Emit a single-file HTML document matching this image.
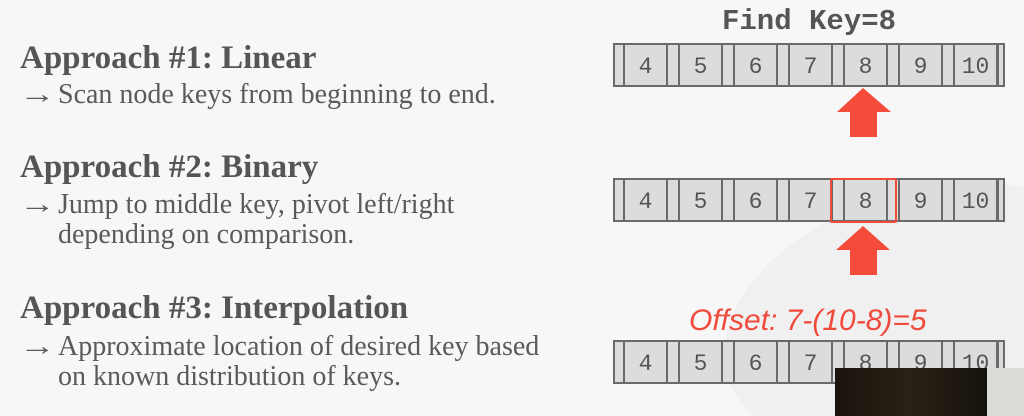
<!DOCTYPE html>
<html style="overflow:hidden;width:1024px;height:416px"><head><meta charset="utf-8"><style>
body{margin:0;width:1024px;height:416px;overflow:hidden;background:#f7f7f7;position:relative;font-family:"Liberation Serif",serif;color:#555}
.clip{position:absolute;left:0;top:0;width:1024px;height:416px;overflow:hidden}
.t{position:absolute;left:20px;font-weight:bold;font-size:33px;color:#555;white-space:nowrap;line-height:1}
.b{position:absolute;left:58px;font-size:28px;color:#5a5a5a;white-space:nowrap;line-height:30px}
.a{position:absolute;left:19px;font-size:28px;color:#5a5a5a;line-height:30px;transform:scaleX(1.3);transform-origin:left}
.arr{position:absolute;left:613px;width:388px;height:40px;border:2px solid #6a6a6a;background:#dcdcdc}
.c{position:absolute;top:0;height:40px;width:41px;border-left:2px solid #6a6a6a;border-right:2px solid #6a6a6a;font-family:"Liberation Mono",monospace;font-size:23px;color:#555;text-align:center;line-height:44px}
.last{position:absolute;top:0;left:382px;height:40px;border-left:2px solid #6a6a6a}
</style></head><body>
<div class="clip"><div style="position:absolute;left:720px;top:190px;width:420px;height:260px;border-radius:50%;background:#f0f0f0;transform:rotate(-15deg)"></div></div>
<div class="t" style="top:42px">Approach #1: Linear</div>
<div class="a" style="top:80px">→</div><div class="b" style="top:80px">Scan node keys from beginning to end.</div>
<div class="t" style="top:151px">Approach #2: Binary</div>
<div class="a" style="top:190px">→</div><div class="b" style="top:190px">Jump to middle key, pivot left/right</div>
<div class="b" style="top:220px">depending on comparison.</div>
<div class="t" style="top:292px">Approach #3: Interpolation</div>
<div class="a" style="top:332px">→</div><div class="b" style="top:332px">Approximate location of desired key based</div>
<div class="b" style="top:362px">on known distribution of keys.</div>

<div style="position:absolute;left:722px;top:4px;font-family:'Liberation Mono',monospace;font-weight:bold;font-size:29px;color:#555;line-height:36px">Find Key=8</div>

<div class="arr" style="top:43px">
<div class="c" style="left:8px">4</div><div class="c" style="left:63px">5</div><div class="c" style="left:118px">6</div><div class="c" style="left:173px">7</div><div class="c" style="left:228px">8</div><div class="c" style="left:283px">9</div><div class="c" style="left:338px">10</div><div class="last"></div></div>
<div class="arr" style="top:178px">
<div class="c" style="left:8px">4</div><div class="c" style="left:63px">5</div><div class="c" style="left:118px">6</div><div class="c" style="left:173px">7</div><div class="c" style="left:228px">8</div><div class="c" style="left:283px">9</div><div class="c" style="left:338px">10</div><div class="last"></div></div>
<div style="position:absolute;left:830px;top:178px;width:63px;height:41px;border:2px solid #f04a3c;border-radius:2px"></div>
<div class="arr" style="top:340px">
<div class="c" style="left:8px">4</div><div class="c" style="left:63px">5</div><div class="c" style="left:118px">6</div><div class="c" style="left:173px">7</div><div class="c" style="left:228px">8</div><div class="c" style="left:283px">9</div><div class="c" style="left:338px">10</div><div class="last"></div></div>

<svg style="position:absolute;left:0;top:0" width="1024" height="416">
<polygon points="863,88 891,112 877,112 877,137 850,137 850,112 837,112" fill="#f44b3a"/>
<polygon points="863,226 890,250 877,250 877,275 850,275 850,250 836,250" fill="#f44b3a"/>
</svg>
<div style="position:absolute;left:689px;top:303px;font-family:'Liberation Sans',sans-serif;font-style:italic;font-size:30px;color:#f04a3c;line-height:36px;white-space:nowrap">Offset: 7-(10-8)=5</div>

<div style="position:absolute;left:835px;top:368px;width:152px;height:48px;background:linear-gradient(90deg,#1a140d,#2a2116 50%,#15110c)"></div>
<div style="position:absolute;left:987px;top:368px;width:37px;height:48px;background:#dcdcd6"></div>
</body></html>
